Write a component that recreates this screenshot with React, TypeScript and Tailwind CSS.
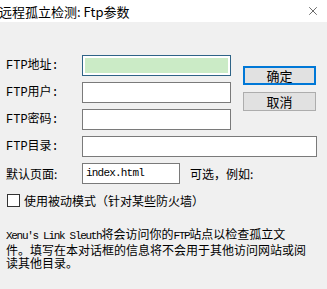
import { X } from 'lucide-react';

const cjk = "[font-family:'Noto_Sans_CJK_SC',sans-serif]";
const mono = "[font-family:'Liberation_Mono','Noto_Sans_CJK_SC',monospace]";

function Field({ label, width, mono: isMono, focused, value }: { label: string; width: string; mono?: boolean; focused?: boolean; value?: string }) {
  return (
    <div className="flex h-[21px] items-center">
      <span className={`w-[76px] text-[12px] leading-none text-black ${isMono ? mono : cjk}`}>{label}</span>
      {focused ? (
        <div className={`${width} h-[21px] border border-[#2f6487] bg-white p-[2px]`}>
          <div className="h-full w-full bg-[#cbebc6]" />
        </div>
      ) : (
        <div className={`${width} flex h-[21px] items-center border border-[#7a7a7a] bg-white px-[3px]`}>
          {value && (
            <span className="[font-family:'Liberation_Mono',monospace] text-[11px] leading-none tracking-[-0.8px] text-black">{value}</span>
          )}
        </div>
      )}
    </div>
  );
}

export default function App() {
  return (
    <div className="h-[289px] w-[327px] overflow-hidden bg-[#f0f0f0]">
      <div className="flex h-[22px] items-center justify-between bg-white">
        <span className={`-ml-[1px] text-[13px] leading-none text-black ${cjk}`}>远程孤立检测: Ftp参数</span>
        <X size={14} strokeWidth={1} className="mr-[7px] text-black" />
      </div>

      <div className="pl-[6px] pt-[33px]">
        <div className="flex">
          <div className="flex flex-col gap-[6px]">
            <Field label="FTP地址:" width="w-[149px]" mono focused />
            <Field label="FTP用户:" width="w-[149px]" mono />
            <Field label="FTP密码:" width="w-[149px]" mono />
          </div>
          <div className="ml-[12px] mt-[11px] flex flex-col gap-[7px]">
            <button className={`flex h-[19px] w-[73px] items-center justify-center border-2 border-[#0078d7] bg-[#e1e1e1] text-[13px] leading-none text-black ${cjk}`}>
              确定
            </button>
            <button className={`flex h-[19px] w-[73px] items-center justify-center border border-[#adadad] bg-[#e1e1e1] text-[13px] leading-none text-black ${cjk}`}>
              取消
            </button>
          </div>
        </div>

        <div className="mt-[6px] flex flex-col gap-[6px]">
          <Field label="FTP目录:" width="w-[235px]" mono />
          <div className="flex items-center">
            <Field label="默认页面:" width="w-[98px]" value="index.html" />
            <span className={`ml-[10px] text-[12px] leading-none text-black ${cjk}`}>可选，例如:</span>
          </div>
        </div>

        <div className="mt-[10px] flex items-center">
          <div className="ml-[1px] h-[13px] w-[13px] border border-[#333333] bg-white" />
          <span className={`ml-[4px] text-[12px] leading-none text-black ${cjk}`}>使用被动模式（针对某些防火墙）</span>
        </div>

        <p className={`mt-[20px] text-[12px] leading-[13px] text-black ${cjk}`}>
          <span className="[font-family:'Liberation_Mono',monospace] text-[11px] tracking-[-1.3px]">Xenu's Link Sleuth</span>将会访问你的<span className="[font-family:'Liberation_Mono',monospace] text-[11px] tracking-[-1.3px]">FTP</span>站点以检查孤立文
          <br />
          件。填写在本对话框的信息将不会用于其他访问网站或阅
          <br />
          读其他目录。
        </p>
      </div>
    </div>
  );
}
